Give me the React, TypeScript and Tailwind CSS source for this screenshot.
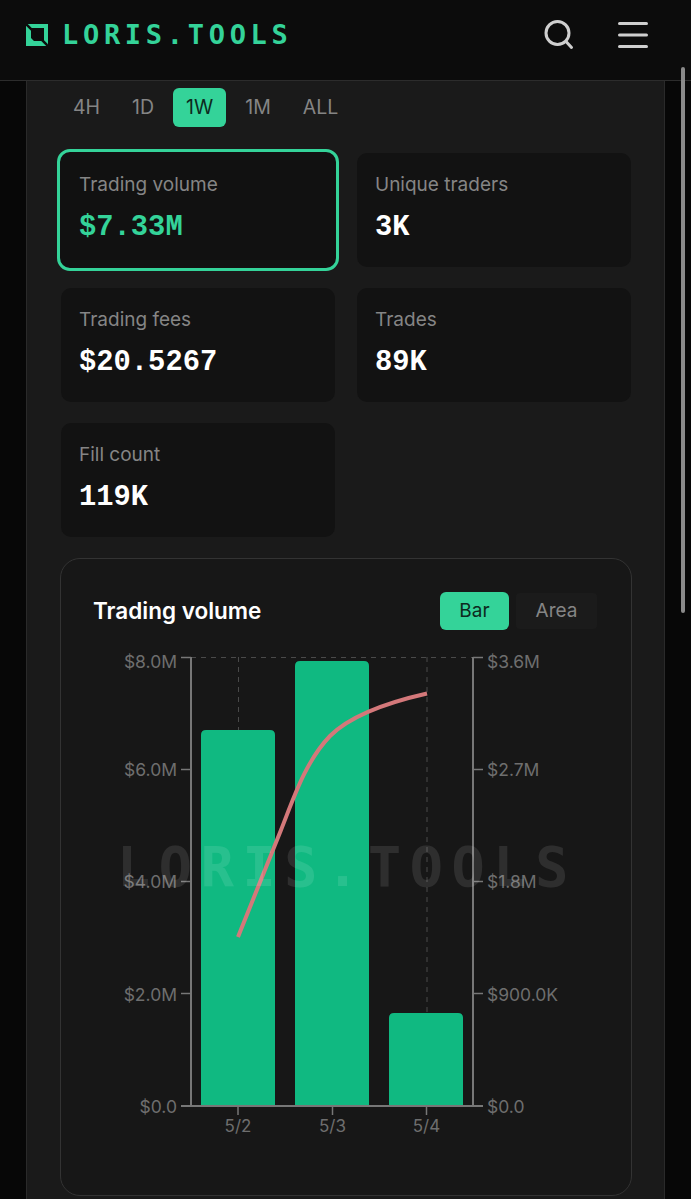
import React from "react";

const tabs = ["4H", "1D", "1W", "1M", "ALL"];

const stats = [
  { label: "Trading volume", value: "$7.33M", active: true },
  { label: "Unique traders", value: "3K" },
  { label: "Trading fees", value: "$20.5267" },
  { label: "Trades", value: "89K" },
  { label: "Fill count", value: "119K" },
];

const leftTicks = [
  { y: 657.5, ty: 668, label: "$8.0M" },
  { y: 769.5, ty: 776, label: "$6.0M" },
  { y: 881.5, ty: 888, label: "$4.0M" },
  { y: 993.5, ty: 1001, label: "$2.0M" },
  { y: 1105.5, ty: 1113, label: "$0.0" },
];

const rightTicks = [
  { y: 657.5, ty: 668, label: "$3.6M" },
  { y: 769.5, ty: 776, label: "$2.7M" },
  { y: 881.5, ty: 888, label: "$1.8M" },
  { y: 993.5, ty: 1001, label: "$900.0K" },
  { y: 1105.5, ty: 1113, label: "$0.0" },
];

const bars = [
  { x: 201, top: 730, label: "5/2", mid: 238 },
  { x: 295, top: 661, label: "5/3", mid: 332.5 },
  { x: 389, top: 1013, label: "5/4", mid: 426.5 },
];

function Logo() {
  return (
    <div className="flex items-center gap-[14px]">
      <svg width="22" height="22" viewBox="0 0 22 22">
        <path d="M0 0H22V22H0ZM5 4H18V17H8L5 14Z" fill="#34d399" fillRule="evenodd" />
        <path d="M0 0L22 22" stroke="#0c0c0c" strokeWidth="2.5" />
      </svg>
      <span className="font-['DejaVu_Sans_Mono',monospace] text-[27px] leading-none font-bold tracking-[4.7px] text-[#34d399]">
        LORIS.TOOLS
      </span>
    </div>
  );
}

function StatCard({ label, value, active }: { label: string; value: string; active?: boolean }) {
  return (
    <div
      className={
        active
          ? "-m-1 flex h-[122px] flex-col rounded-[13px] border-[3px] border-[#34d399] bg-[#111111] pt-[22px] pl-[19px]"
          : "flex h-[114px] flex-col rounded-[10px] bg-[#121212] pt-[21px] pl-[18px]"
      }
    >
      <span className="text-[19px] leading-[22px] text-[#858585]">{label}</span>
      <span
        className={`mt-[15px] font-['Liberation_Mono',monospace] text-[28.8px] leading-[34px] font-bold ${
          active ? "text-[#34d399]" : "text-white"
        }`}
      >
        {value}
      </span>
    </div>
  );
}

function Chart() {
  return (
    <svg width="570" height="510" viewBox="60 640 570 510" className="block">
      <g stroke="#4a4a4a" strokeWidth="1" strokeDasharray="5 5" fill="none">
        <path d="M191 657.5H473" />
        <path d="M238.5 657V730" />
        <path d="M427 657V1013" />
      </g>

      {bars.map((b) => (
        <path
          key={b.label}
          d={`M${b.x} 1106V${b.top + 5}Q${b.x} ${b.top} ${b.x + 5} ${b.top}H${b.x + 69}Q${b.x + 74} ${b.top} ${b.x + 74} ${b.top + 5}V1106Z`}
          fill="#10b981"
        />
      ))}

      <g stroke="#777777" strokeWidth="2" fill="none">
        <path d="M191 657V1106" />
        <path d="M473 657V1106" />
        <path d="M181 1106H483" />
      </g>
      <g stroke="#777777" strokeWidth="1.5" fill="none">
        {leftTicks.slice(0, 4).map((t) => (
          <path key={t.label} d={`M181 ${t.y}H191`} />
        ))}
        {rightTicks.slice(0, 4).map((t) => (
          <path key={t.label} d={`M473 ${t.y}H483`} />
        ))}
        {bars.map((b) => (
          <path key={b.label} d={`M${b.mid} 1106V1115`} />
        ))}
      </g>

      <path
        d="M238 937C252 902 268 862 281 830C293 800 305 762 330 736C350 716 385 703 427 693.5"
        stroke="#d4787a"
        strokeWidth="4"
        fill="none"
      />

      <g className="font-['Inter',sans-serif]" fontSize="17.5" fill="#6e6e6e">
        {leftTicks.map((t) => (
          <text key={t.label} x="177" y={t.ty} textAnchor="end">
            {t.label}
          </text>
        ))}
        {rightTicks.map((t) => (
          <text key={t.label} x="487" y={t.ty}>
            {t.label}
          </text>
        ))}
        {bars.map((b) => (
          <text key={b.label} x={b.mid} y="1132" fontSize="17" textAnchor="middle">
            {b.label}
          </text>
        ))}
      </g>
    </svg>
  );
}

export default function App() {
  return (
    <div className="relative h-[1199px] overflow-hidden bg-[#070707] font-['Inter',sans-serif]">
      <header className="flex h-[81px] items-center justify-between border-b border-[#2c2c2c] bg-[#0c0c0c] pr-[43px] pb-[11px] pl-[26px]">
        <Logo />
        <div className="flex items-center gap-[44px]">
          <svg width="30" height="30" viewBox="0 0 30 30" fill="none" stroke="#cfcfcf" strokeWidth="3">
            <circle cx="13.5" cy="13" r="11.5" />
            <path d="M22 21.5L27.5 27.5" strokeLinecap="round" />
          </svg>
          <svg width="30" height="26" viewBox="0 0 30 26" fill="none" stroke="#cfcfcf" strokeWidth="3" strokeLinecap="round">
            <path d="M1.5 1.5H28.5" />
            <path d="M1.5 13H28.5" />
            <path d="M1.5 24.5H28.5" />
          </svg>
        </div>
      </header>

      <main className="mx-[26px] h-[1118px] border-x border-[#2a2a2a] bg-[#1a1a1a] pt-[7px] pr-[32px] pl-[33px]">
        {/* Range tabs */}
        <div className="flex items-center gap-[6px]">
          {tabs.map((t) => (
            <button
              key={t}
              className={`flex h-[39px] items-center rounded-[6px] px-[13px] pt-px text-[19.5px] ${
                t === "1W" ? "bg-[#34d399] text-[#0d2a20]" : "text-[#858585]"
              }`}
            >
              {t}
            </button>
          ))}
        </div>

        {/* Stat cards */}
        <div className="mx-px mt-[26px] grid grid-cols-2 gap-x-[22px] gap-y-[21px]">
          {stats.map((s) => (
            <StatCard key={s.label} {...s} />
          ))}
        </div>

        {/* Chart card */}
        <section className="relative mt-[21px] h-[638px] rounded-[20px] border border-[#333333] bg-[#171717]">
          <div className="flex items-center justify-between pt-[32px] pr-[34px] pl-[32px]">
            <h2 className="pt-px text-[22.5px] leading-[38px] font-semibold text-white">Trading volume</h2>
            <div className="flex items-center gap-[7px]">
              <button className="flex h-[38px] w-[69px] items-center justify-center rounded-[6px] bg-[#34d399] pt-px text-[19px] text-[#0d2a20]">
                Bar
              </button>
              <button className="flex h-[36px] w-[81px] items-center justify-center rounded-[4px] bg-[#1b1b1b] pt-px text-[19px] text-[#858585]">
                Area
              </button>
            </div>
          </div>
          <div className="mt-[10px] -ml-px">
            <Chart />
          </div>
          {/* Watermark */}
          <span className="absolute top-[281px] left-[56px] font-['DejaVu_Sans_Mono',monospace] text-[55px] leading-none font-bold tracking-[8.7px] whitespace-nowrap text-white/10">
            LORIS.TOOLS
          </span>
        </section>
      </main>

      {/* Scrollbar thumb */}
      <div className="absolute top-[67px] left-[681px] h-[546px] w-[4px] rounded-full bg-[#8a8a8a]" />
    </div>
  );
}
